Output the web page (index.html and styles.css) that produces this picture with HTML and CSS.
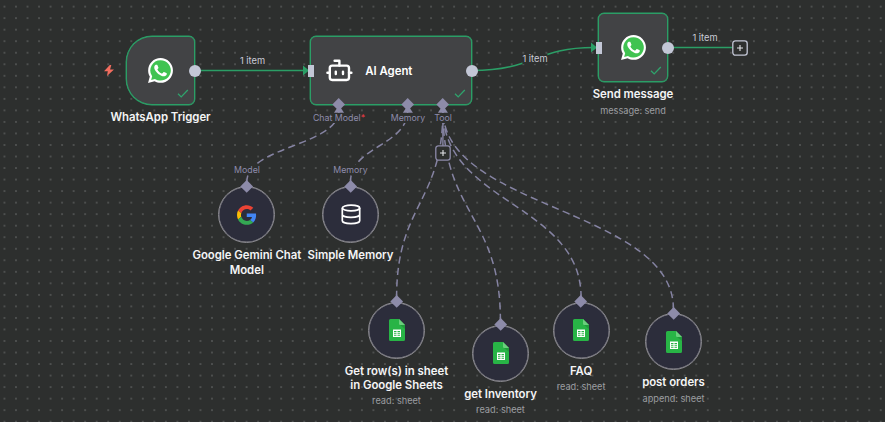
FILE: index.html
```html
<!DOCTYPE html>
<html lang="en">
<head>
<meta charset="utf-8">
<title>Workflow canvas</title>
<link rel="stylesheet" href="styles.css">
</head>
<body>
<svg class="defs" width="0" height="0" aria-hidden="true">
  <symbol id="whatsapp" viewBox="0 0 24 24">
    <path fill="#fff" d="M.057 24l1.687-6.163c-1.041-1.804-1.588-3.849-1.587-5.946.003-6.556 5.338-11.891 11.893-11.891 3.181.001 6.167 1.24 8.413 3.488 2.245 2.248 3.481 5.236 3.48 8.414-.003 6.557-5.338 11.892-11.893 11.892-1.99-.001-3.951-.5-5.688-1.448l-6.305 1.654z"/>
    <path fill="#40c351" d="M12.05 2.1a9.8 9.8 0 0 0-8.3 15l.25.4-1 3.55 3.7-.95.35.2a9.8 9.8 0 1 0 5-18.2z"/>
    <path fill="#fff" d="M17.472 14.382c-.297-.149-1.758-.867-2.03-.967-.273-.099-.471-.148-.67.15-.197.297-.767.966-.94 1.164-.173.199-.347.223-.644.075-.297-.15-1.255-.463-2.39-1.475-.883-.788-1.48-1.761-1.653-2.059-.173-.297-.018-.458.13-.606.134-.133.298-.347.446-.52.149-.174.198-.298.298-.497.099-.198.05-.371-.025-.52-.075-.149-.669-1.612-.916-2.207-.242-.579-.487-.5-.669-.51-.173-.008-.371-.01-.57-.01-.198 0-.52.074-.792.372-.272.297-1.04 1.016-1.04 2.479 0 1.462 1.065 2.875 1.213 3.074.149.198 2.096 3.2 5.077 4.487.709.306 1.262.489 1.694.625.712.227 1.36.195 1.871.118.571-.085 1.758-.719 2.006-1.413.248-.694.248-1.289.173-1.413-.074-.124-.272-.198-.57-.347"/>
  </symbol>
  <symbol id="sheets" viewBox="0 0 16 22">
    <path fill="#28b446" d="M1.500 0H10l6 6v14.500a1.500 1.500 0 0 1-1.500 1.500h-13A1.500 1.500 0 0 1 0 20.500v-19A1.500 1.500 0 0 1 1.500 0z"/>
    <path fill="#219b3b" d="M11 6h5v4z"/>
    <path fill="#6ace7c" d="M10 0l6 6h-4.800A1.200 1.200 0 0 1 10 4.800z"/>
    <path fill="#fff" fill-rule="evenodd" d="M4 10.500h8v7.500H4zM5 12v1.200h2.500V12zM8.500 12v1.200H11V12zM5 14.200v1h2.500v-1zM8.500 14.200v1H11v-1zM5 16.200v.9h2.500v-.9zM8.500 16.200v.9H11v-.9z"/>
  </symbol>
  <symbol id="check" viewBox="0 0 12 9">
    <path fill="none" stroke="#2fa36c" stroke-width="1.300" d="M1 4.800l3.200 3.100L10.800 1"/>
  </symbol>
</svg>

<main class="canvas">
  <svg class="edges" width="885" height="422">
    <defs>
      <pattern id="dots" x="-1.300" y="0.850" width="11.530" height="11.530" patternUnits="userSpaceOnUse">
        <circle cx="5.760" cy="5.760" r="0.700" fill="#7d7f7f"/>
      </pattern>
    </defs>
    <rect width="885" height="422" fill="url(#dots)"/>
    <g class="main-edge">
      <path d="M195 70.500H305"/>
      <path d="M472 70.500C535 70.500 535 47.500 594 47.500"/>
      <path d="M668 47.500H732"/>
    </g>
    <g class="arrow">
      <path d="M303 65.400l6 5.100-6 5.100z"/>
      <path d="M591 42.400l6 5.100-6 5.100z"/>
    </g>
    <g class="sub-edge">
      <path d="M246.800 182C246.800 146 339 146 339 110"/>
      <path d="M350.500 182C350.500 146 407.700 146 407.700 110"/>
      <path d="M396.600 297.500C396.600 203.500 442.900 203.500 442.900 110"/>
      <path d="M500.400 320.500C500.400 215 442.900 215 442.900 110"/>
      <path d="M581.100 297.500C581.100 203.500 442.900 203.500 442.900 110"/>
      <path d="M673.400 309C673.400 209 442.900 209 442.900 110"/>
    </g>
    <path class="sub-line" d="M442.900 106V146"/>
    <g class="sub-arrow">
      <path d="M339 105l5 7.700h-10z"/>
      <path d="M407.900 105l5 7.700h-10z"/>
      <path d="M442.900 105l5 7.700h-10z"/>
    </g>
  </svg>

  <svg class="bolt" viewBox="0 0 10 11"><path d="M5.800 0L0 6.300h3.800L3 11l7-6.600H6.100L7.300 0z"/></svg>

  <section class="node box trigger">
    <svg class="wa"><use href="#whatsapp"/></svg>
    <svg class="tick"><use href="#check"/></svg>
    <i class="port out"></i>
    <div class="caption"><b>WhatsApp Trigger</b></div>
  </section>

  <section class="node box agent">
    <svg class="bot" viewBox="0 0 24 24"><path d="M12 8V4H8M2 14h2M20 14h2M15 13v2M9 13v2"/><rect x="4" y="8" width="16" height="12" rx="2"/></svg>
    <b class="name">AI Agent</b>
    <svg class="tick"><use href="#check"/></svg>
    <i class="port in"></i><i class="port out"></i>
    <i class="gem gem-model"></i><i class="gem gem-memory"></i><i class="gem gem-tool"></i>
  </section>

  <section class="node box send">
    <svg class="wa"><use href="#whatsapp"/></svg>
    <svg class="tick"><use href="#check"/></svg>
    <i class="port in"></i><i class="port out"></i>
    <div class="caption"><b>Send message</b><small>message: send</small></div>
  </section>

  <span class="tag l1">1 item</span>
  <span class="tag l2">1 item</span>
  <span class="tag l3">1 item</span>
  <span class="tag sub s1">Chat Model<em>*</em></span>
  <span class="tag sub s2">Memory</span>
  <span class="tag sub s3">Tool</span>
  <span class="tag sub s4">Model</span>
  <span class="tag sub s5">Memory</span>

  <svg class="plus p1" viewBox="0 0 16 16"><rect x=".8" y=".8" width="14.400" height="14.400" rx="2.600"/><path d="M8 5v6M5 8h6"/></svg>
  <svg class="plus p2" viewBox="0 0 16 16"><rect x=".8" y=".8" width="14.400" height="14.400" rx="2.600"/><path d="M8 5v6M5 8h6"/></svg>

  <section class="node disc gemini">
    <svg class="google" viewBox="0 0 48 48">
      <path fill="#ea4335" d="M24 9.500c3.540 0 6.710 1.220 9.210 3.600l6.850-6.850C35.900 2.380 30.470 0 24 0 14.620 0 6.510 5.380 2.560 13.220l7.980 6.190C12.430 13.720 17.740 9.500 24 9.500z"/>
      <path fill="#4285f4" d="M46.980 24.550c0-1.570-.15-3.090-.38-4.550H24v9.020h12.940c-.58 2.960-2.260 5.480-4.780 7.180l7.730 6c4.510-4.180 7.090-10.360 7.090-17.650z"/>
      <path fill="#fbbc05" d="M10.530 28.590c-.48-1.450-.76-2.990-.76-4.590s.27-3.140.76-4.590l-7.980-6.190C.92 16.460 0 20.120 0 24c0 3.880.92 7.540 2.560 10.780l7.970-6.190z"/>
      <path fill="#34a853" d="M24 48c6.480 0 11.930-2.130 15.890-5.810l-7.730-6c-2.150 1.450-4.920 2.300-8.160 2.300-6.260 0-11.570-4.220-13.470-9.910l-7.980 6.190C6.510 42.620 14.620 48 24 48z"/>
    </svg>
    <i class="gem"></i>
    <div class="caption"><b>Google Gemini Chat<br>Model</b></div>
  </section>
  <section class="node disc memory">
    <svg class="db" viewBox="0 0 20 21"><ellipse cx="10" cy="4" rx="8.700" ry="2.900"/><path d="M1.300 4v12.800c0 1.600 3.900 2.900 8.700 2.900s8.700-1.300 8.700-2.900V4M1.300 10.400c0 1.600 3.900 2.900 8.700 2.900s8.700-1.300 8.700-2.900"/></svg>
    <i class="gem"></i>
    <div class="caption"><b>Simple Memory</b></div>
  </section>
  <section class="node disc rows">
    <svg class="sheet"><use href="#sheets"/></svg>
    <i class="gem"></i>
    <div class="caption"><b>Get row(s) in sheet<br>in Google Sheets</b><small>read: sheet</small></div>
  </section>
  <section class="node disc inventory">
    <svg class="sheet"><use href="#sheets"/></svg>
    <i class="gem"></i>
    <div class="caption"><b>get Inventory</b><small>read: sheet</small></div>
  </section>
  <section class="node disc faq">
    <svg class="sheet"><use href="#sheets"/></svg>
    <i class="gem"></i>
    <div class="caption"><b>FAQ</b><small>read: sheet</small></div>
  </section>
  <section class="node disc orders">
    <svg class="sheet"><use href="#sheets"/></svg>
    <i class="gem"></i>
    <div class="caption"><b>post orders</b><small>append: sheet</small></div>
  </section>
</main>
</body>
</html>
```

FILE: styles.css
```css
* { box-sizing: border-box; }
body { margin: 0; background: #2d2f2e; font-family: Inter, "Liberation Sans", sans-serif; }
.defs { position: absolute; }
.canvas { position: relative; width: 885px; height: 422px; overflow: hidden; background: #2d2f2e; }
.edges { display: block; }
.edges path { fill: none; }
.main-edge path { stroke: #2b9e66; stroke-width: 1.5; }
.edges .arrow path { fill: #2b9e66; }
.sub-edge path { stroke: #8583a2; stroke-width: 1.5; stroke-dasharray: 5.77 5.77; stroke-linecap: square; }
.edges .sub-line { stroke: #8583a2; stroke-width: 1.4; }
.edges .sub-arrow path { fill: #8d8ba9; }

.node { position: absolute; display: flex; align-items: center; justify-content: center; }
.box { width: 69px; height: 69px; top: 36px; background: #424345; border: 1px solid #2b9e66; border-radius: 6px; box-shadow: 0 0 0 .4px #2b9e66; }
.trigger { left: 126px; border-radius: 26px 6px 6px 26px; }
.agent { left: 310px; width: 162px; justify-content: flex-start; padding-left: 13.500px; gap: 12px; }
.send { left: 598px; top: 13px; width: 70px; }
.wa { width: 25px; height: 25px; }
.tick { position: absolute; right: 5px; bottom: 6px; width: 12px; height: 9px; }
.bot { width: 28.800px; height: 28.800px; fill: none; stroke: #fff; stroke-width: 2; stroke-linecap: round; stroke-linejoin: round; }
.name { font-size: 11.400px; font-weight: 600; letter-spacing: -.03px; color: #fff; }

.port { position: absolute; top: 50%; background: #c3c7d6; }
.port.out { right: -6.500px; width: 12px; height: 12px; margin-top: -6px; border-radius: 50%; }
.port.in { left: -3px; width: 6px; height: 12px; margin-top: -6px; }
.gem { position: absolute; left: 50%; top: -5.500px; width: 9.400px; height: 9.400px; margin-left: -4.700px; background: #8d8ba9; transform: rotate(45deg); }
.agent .gem { top: auto; bottom: -5.500px; }
.agent .gem-model { left: 28px; }
.agent .gem-memory { left: 96.900px; }
.agent .gem-tool { left: 131.900px; }

.caption { position: absolute; top: 100%; left: 50%; width: 140px; transform: translateX(-50%); display: flex; flex-direction: column; align-items: center; text-align: center; padding-top: 6px; white-space: nowrap; }
.caption b { font-size: 11.400px; line-height: 15px; font-weight: 600; letter-spacing: -.03px; color: #f4f4f5; }
.caption small { font-size: 9.200px; line-height: 12px; margin-top: 2.500px; color: #9b9da0; }

.disc { width: 57px; height: 57px; border: 1px solid #8b8a90; border-radius: 50%; background: #2c2d3b; box-shadow: inset 0 0 0 .4px #8b8a90; }
.gemini { left: 218.300px; top: 186px; }
.memory { left: 322px; top: 186px; }
.rows { left: 368px; top: 301.500px; }
.rows .caption b { line-height: 14.500px; }
.inventory { left: 472px; top: 324.500px; }
.faq { left: 552.600px; top: 301.500px; }
.orders { left: 645px; top: 313px; }
.google { width: 19.500px; height: 20px; }
.db { width: 20px; height: 21px; fill: none; stroke: #fff; stroke-width: 1.700; }
.sheet { width: 16px; height: 22px; }

.bolt { position: absolute; left: 103.500px; top: 64.500px; width: 10px; height: 11px; fill: #f26d5f; }
.tag { position: absolute; transform: translate(-50%, -50%); font-size: 9.300px; line-height: 10px; color: #c9cbd6; background: #2d2f2e; white-space: nowrap; }
.tag.sub { font-size: 8.800px; color: #8e8cab; }
.tag em { color: #f03c46; font-style: normal; }
.l1 { left: 252.500px; top: 61px; }
.l2 { left: 535px; top: 59px; }
.l3 { left: 705px; top: 38px; }
.s1 { left: 339px; top: 118px; }
.s2 { left: 408px; top: 118px; }
.s3 { left: 443px; top: 118px; }
.s4 { left: 247px; top: 170px; }
.s5 { left: 350.500px; top: 170px; }

.plus { position: absolute; width: 16px; height: 16px; fill: #2d2f2e; stroke: #c3c7d6; stroke-width: 1.300; }
.plus path { stroke: #e4e5ea; stroke-width: 1.100; }
.p1 { left: 731.500px; top: 39.500px; }
.p2 { left: 434.800px; top: 145px; stroke: #8d8ba9; }
```
